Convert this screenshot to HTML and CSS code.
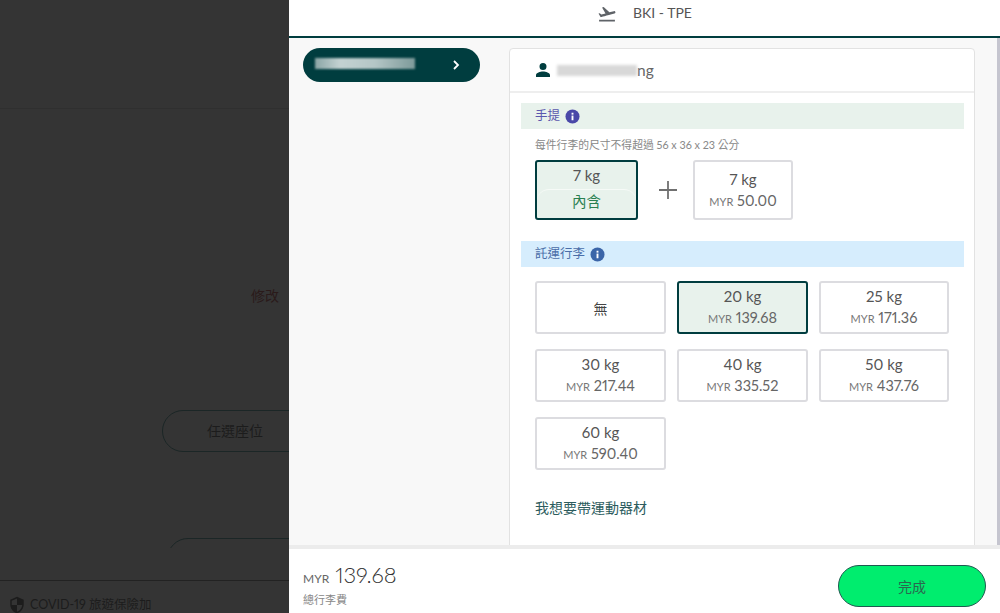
FILE: index.html
```html
<!DOCTYPE html>
<html lang="zh-Hant">
<head>
<meta charset="utf-8">
<title>行李</title>
<link rel="stylesheet" href="styles.css">
</head>
<body>
<div class="page">
  <aside class="backdrop">
    <div class="bd-rule"></div>
    <div class="bd-edit">修改</div>
    <div class="bd-seat">任選座位</div>
    <div class="bd-seat2"></div>
    <div class="bd-foot">
      <svg class="bd-shield" viewBox="0 0 24 24"><path d="M12 1 3 5v6c0 5.6 3.8 10.7 9 12 5.200-1.300 9-6.400 9-12V5l-9-4Zm0 11h7c-.5 4.100-3.300 7.800-7 8.900V12H5V6.300l7-3.100V12Z" fill="#1c1c1c"/></svg>
      <span>COVID-19 旅遊保險加</span>
    </div>
  </aside>
  <main class="panel">
    <header class="route">
      <svg class="plane" viewBox="0 0 24 24"><path d="M2.500 19h19v2h-19v-2Zm19.570-9.360c-.21-.8-1.040-1.280-1.840-1.060L14.920 10 8 3.570l-1.930.51 4.140 7.170-4.970 1.330-1.970-1.540-1.450.39 2.590 4.490s7.120-1.900 16.570-4.430c.81-.23 1.280-1.050 1.090-1.850Z" fill="#5f6368"/></svg>
      <span>BKI - TPE</span>
    </header>
    <div class="content">
      <div class="side">
        <div class="pill">
          <span class="blur-name"></span>
          <svg class="chev" viewBox="0 0 10 12"><path d="M3 2l4 4-4 4" fill="none" stroke="#fff" stroke-width="1.800"/></svg>
        </div>
      </div>
      <section class="card">
        <div class="person">
          <svg class="person-ic" viewBox="0 0 16 16"><path d="M8 8a3.500 3.500 0 1 0 0-7 3.500 3.500 0 0 0 0 7Zm0 1.500c-2.700 0-7 1.300-7 3.700V15h14v-1.800c0-2.400-4.300-3.700-7-3.700Z" fill="#003d3f"/></svg>
          <span class="blur-passenger"></span><span class="person-end">ng</span>
        </div>
        <div class="body">
          <div class="band band-green">
            <span class="band-t t-purple">手提</span>
            <svg class="info" viewBox="0 0 16 16"><circle cx="8" cy="8" r="7.500" fill="#4a48a8"/><rect x="7" y="7" width="2" height="5" fill="#fff"/><rect x="7" y="4" width="2" height="2" fill="#fff"/></svg>
          </div>
          <p class="note">每件行李的尺寸不得超過 56 x 36 x 23 公分</p>
          <div class="hand">
            <div class="hand-sel">
              <div class="w">7 kg</div>
              <div class="incl">內含</div>
            </div>
            <svg class="plus" viewBox="0 0 18 18"><path d="M9 0v18M0 9h18" stroke="#707070" stroke-width="1.800"/></svg>
            <div class="opt hand-opt"><div class="w">7 kg</div><div class="p"><small>MYR</small> 50.00</div></div>
          </div>
          <div class="band band-blue">
            <span class="band-t t-blue">託運行李</span>
            <svg class="info" viewBox="0 0 16 16"><circle cx="8" cy="8" r="7.500" fill="#3b65a8"/><rect x="7" y="7" width="2" height="5" fill="#fff"/><rect x="7" y="4" width="2" height="2" fill="#fff"/></svg>
          </div>
          <div class="grid">
            <div class="opt"><div class="none">無</div></div>
            <div class="opt sel"><div class="w">20 kg</div><div class="p"><small>MYR</small> 139.68</div></div>
            <div class="opt"><div class="w">25 kg</div><div class="p"><small>MYR</small> 171.36</div></div>
            <div class="opt"><div class="w">30 kg</div><div class="p"><small>MYR</small> 217.44</div></div>
            <div class="opt"><div class="w">40 kg</div><div class="p"><small>MYR</small> 335.52</div></div>
            <div class="opt"><div class="w">50 kg</div><div class="p"><small>MYR</small> 437.76</div></div>
            <div class="opt"><div class="w">60 kg</div><div class="p"><small>MYR</small> 590.40</div></div>
          </div>
          <div class="sport">我想要帶運動器材</div>
        </div>
      </section>
      <div class="scroll"></div>
    </div>
    <footer class="foot">
      <div class="total">
        <div class="amount"><small>MYR</small> 139.68</div>
        <div class="total-l">總行李費</div>
      </div>
      <button class="done">完成</button>
    </footer>
  </main>
</div>
</body>
</html>
```
FILE: styles.css
```css
* { box-sizing: border-box; }
html, body { margin: 0; height: 100%; overflow: hidden; }
body { font-family: Lato, "Noto Sans CJK TC", sans-serif; font-variant-numeric: proportional-nums; color: #444; background: #fff; }
.page { display: flex; width: 1000px; height: 613px; }

.backdrop { position: relative; width: 289px; flex: none; background: #343434; overflow: hidden; color: #1c1c1c; }
.bd-rule { position: absolute; left: 0; right: 0; top: 108px; height: 1px; background: #2f2f2f; }
.bd-edit { position: absolute; left: 251px; top: 287px; font-size: 14px; line-height: 18px; color: #2a1a1a; }
.bd-seat { position: absolute; left: 162px; top: 410px; width: 200px; height: 42px; border: 1px solid #1b2626; border-radius: 21px; padding-left: 44px; font-size: 14px; line-height: 40px; }
.bd-seat2 { position: absolute; left: 167px; top: 538px; width: 200px; height: 42px; border: 1px solid #1b2626; border-radius: 21px; clip-path: inset(0 0 32px 0); }
.bd-foot { position: absolute; left: 0; right: 0; top: 580px; height: 33px; border-top: 1px solid #222; padding: 16px 0 0 8px; display: flex; align-items: center; gap: 4px; font-size: 12.500px; line-height: 16px; }
.bd-shield { width: 18px; height: 18px; flex: none; }

.panel { flex: 1; display: flex; flex-direction: column; min-width: 0; background: #f8f8f8; }
.route { height: 38px; flex: none; background: #fff; border-bottom: 2px solid #003d3f; display: flex; align-items: flex-start; padding: 4px 0 0 308px; gap: 16px; font-size: 14px; line-height: 18px; color: #555; }
.plane { width: 20px; height: 20px; flex: none; }

.content { flex: 1; display: flex; min-height: 0; align-items: flex-start; overflow: hidden; padding: 10px 0 0 14px; }
.side { width: 206px; flex: none; }
.pill { width: 177px; height: 34px; border-radius: 17px; background: #003d3f; display: flex; align-items: center; justify-content: space-between; padding: 0 19px 0 12px; }
.blur-name { width: 100px; height: 11px; margin-top: -3px; background: linear-gradient(90deg, #8aa5a5, #c4d2d2 25%, #b4c6c6 60%, #7d9a9a 100%); filter: blur(1.200px); }
.chev { width: 10px; height: 12px; }

.card { width: 466px; height: 510px; flex: none; background: #fff; border: 1px solid #e2e2e2; border-radius: 4px 4px 0 0; }
.scroll { width: 3px; height: 507px; margin: -10px 0 0 22px; flex: none; background: #c5c5cf; }
.person { height: 44px; border-bottom: 2px solid #eee; display: flex; align-items: center; padding: 0 0 0 25px; font-size: 15.500px; color: #666; }
.person-ic { width: 16px; height: 16px; margin-right: 6px; }
.blur-passenger { width: 80px; height: 11px; background: #d8d8d8; filter: blur(1.500px); }
.body { padding: 10px 10px 0 11px; }
.band { height: 26px; display: flex; align-items: center; padding-left: 14px; gap: 5px; width: 443px; }
.band-green { background: #e8f2ec; }
.band-blue { background: #d6edfd; margin-top: 21px; }
.band-t { font-size: 12.500px; line-height: 16px; }
.t-purple { color: #5a58ae; }
.t-blue { color: #4a6ea8; }
.info { width: 15px; height: 15px; }
.note { margin: 8px 0 0 14px; font-size: 10.800px; line-height: 15px; color: #888; }
.hand { display: flex; align-items: center; margin: 8px 0 0 14px; }
.hand-sel { width: 103px; height: 60px; background: #e8f2ec; border: 2px solid #003d3f; border-radius: 3px; text-align: center; display: flex; flex-direction: column; padding-top: 3px; }
.incl { flex: 1; margin-top: 4px; border-top: 1px solid #f6faf7; border-radius: 12px 12px 0 0; font-size: 14.500px; line-height: 24px; color: #2a8050; }
.plus { width: 18px; height: 18px; margin: 0 16px 0 21px; }
.w { font-size: 15px; line-height: 20px; color: #555; }
.opt .w { margin-bottom: 1px; }
.opt { background: #fff; border: 2px solid #dcdce0; border-radius: 3px; height: 53px; text-align: center; display: flex; flex-direction: column; justify-content: center; }
.hand-opt { width: 100px; height: 60px; }
.p { font-size: 14.500px; line-height: 21px; color: #666; }
.p small { font-size: 11px; color: #777; }
.none { font-size: 14px; color: #444; }
.grid { display: grid; grid-template-columns: 131px 131px 130px; column-gap: 11px; row-gap: 15px; margin: 14px 0 0 14px; }
.opt.sel { background: #e8f2ec; border-color: #003d3f; }
.sport { margin: 29px 0 0 14px; font-size: 14px; line-height: 18px; color: #2c5c5e; }

.foot { height: 68px; flex: none; background: #fff; border-top: 4px solid #ececec; display: flex; align-items: center; justify-content: space-between; padding: 10px 14px 0; position: relative; z-index: 1; }
.total { margin-top: -3px; }
.amount { font-size: 22px; font-weight: 300; line-height: 26px; color: #333; }
.amount small { font-size: 12px; font-weight: 400; color: #666; }
.total-l { margin-top: 1px; font-size: 11px; line-height: 14px; color: #888; }
.done { width: 148px; height: 42px; border-radius: 21px; background: #00ed6e; border: 1px solid #1e5a50; font: 14px "Noto Sans CJK TC", sans-serif; color: #2b6650; padding: 0; }
```
